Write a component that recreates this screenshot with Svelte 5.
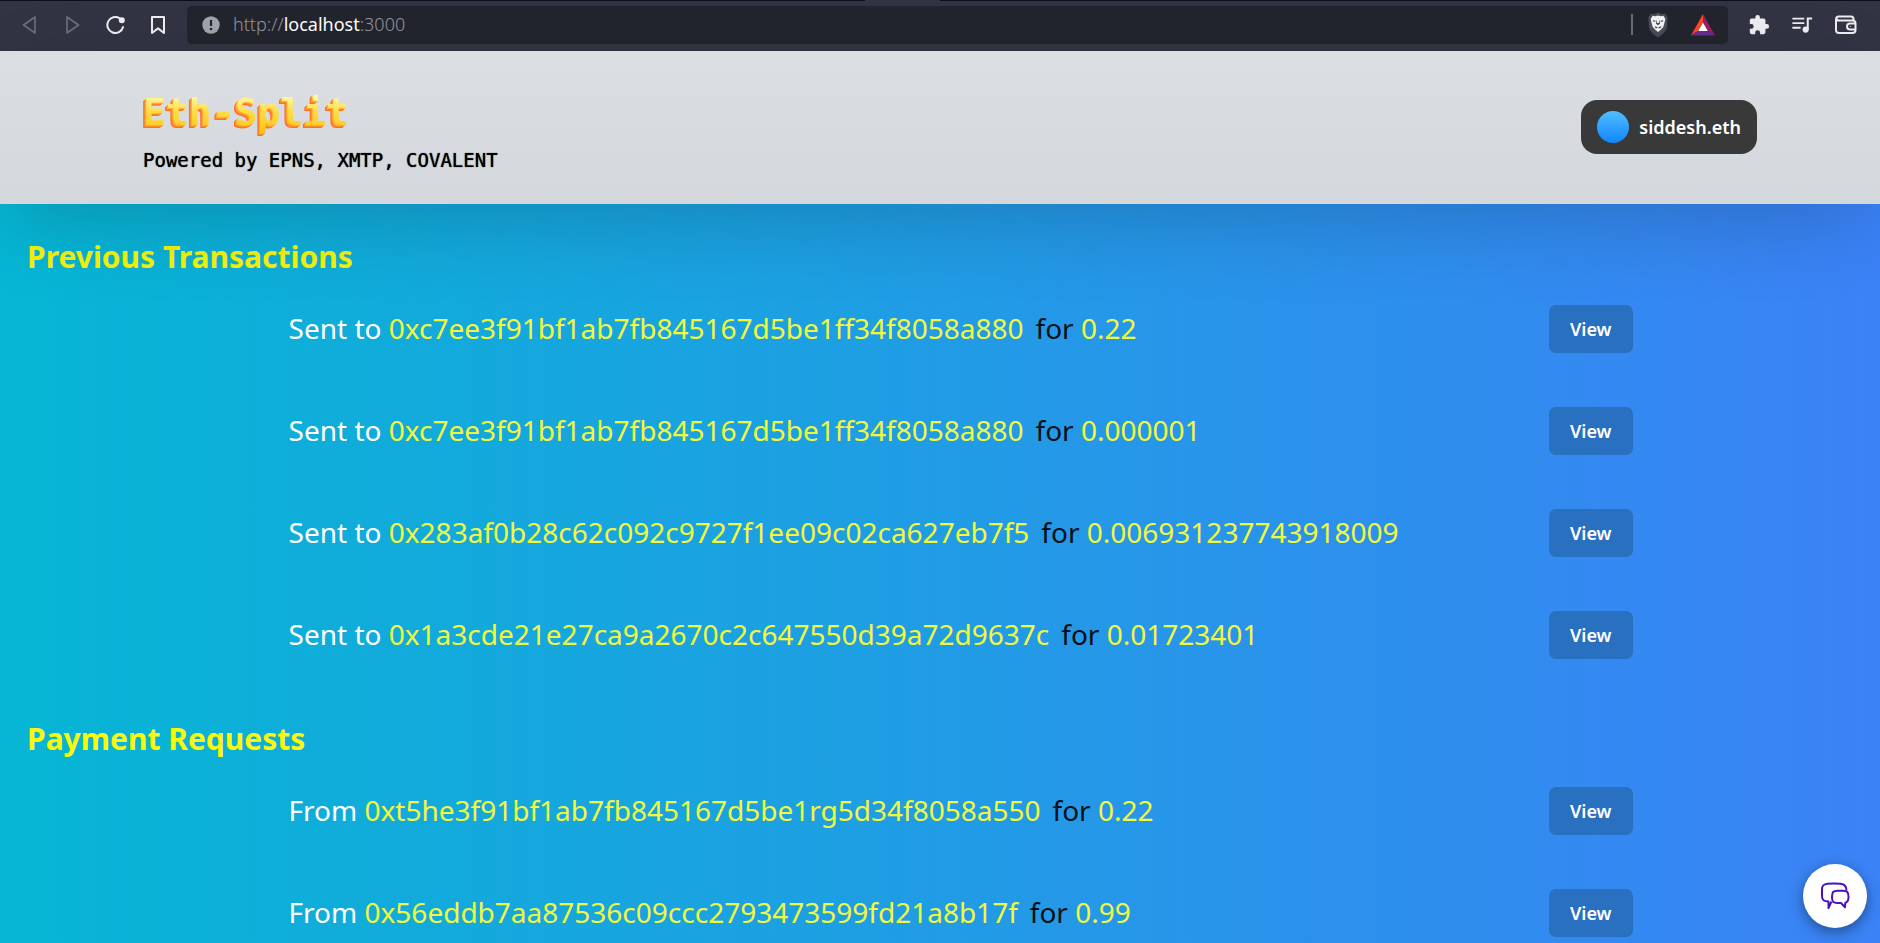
<script>
  const sections = [
    {
      title: 'Previous Transactions',
      verb: 'Sent to',
      rows: [
        { address: '0xc7ee3f91bf1ab7fb845167d5be1ff34f8058a880', amount: '0.22' },
        { address: '0xc7ee3f91bf1ab7fb845167d5be1ff34f8058a880', amount: '0.000001' },
        { address: '0x283af0b28c62c092c9727f1ee09c02ca627eb7f5', amount: '0.006931237743918009' },
        { address: '0x1a3cde21e27ca9a2670c2c647550d39a72d9637c', amount: '0.01723401' }
      ]
    },
    {
      title: 'Payment Requests',
      verb: 'From',
      rows: [
        { address: '0xt5he3f91bf1ab7fb845167d5be1rg5d34f8058a550', amount: '0.22' },
        { address: '0x56eddb7aa87536c09ccc2793473599fd21a8b17f', amount: '0.99' }
      ]
    }
  ];
</script>

<div class="window">
  <nav class="toolbar" aria-label="Browser">
    <div class="tools">
      <button aria-label="Back" class="dim"><svg width="20" height="20" viewBox="0 0 20 20"><path d="M15 2v16L3.500 10z" fill="none" stroke="currentColor" stroke-width="1.7" stroke-linejoin="round" /></svg></button>
      <button aria-label="Forward" class="dim"><svg width="20" height="20" viewBox="0 0 20 20"><path d="M4 2v16l11.500-8z" fill="none" stroke="currentColor" stroke-width="1.7" stroke-linejoin="round" /></svg></button>
      <button aria-label="Reload"><svg width="20" height="20" viewBox="0 0 20 20"><path d="M17.100 12.100a8 8 0 1 1-3.400-8.800" fill="none" stroke="currentColor" stroke-width="2" stroke-linecap="round" /><circle cx="15.800" cy="5.300" r="3" fill="currentColor" /></svg></button>
      <button aria-label="Bookmark"><svg width="20" height="20" viewBox="0 0 20 20"><path d="M3 2h12v16l-6-4.600L3 18z" fill="none" stroke="currentColor" stroke-width="2" stroke-linejoin="round" /></svg></button>
    </div>
    <div class="address">
      <svg width="18" height="18" viewBox="0 0 18 18"><circle cx="9" cy="9" r="8.700" fill="#a2a4ac" /><path d="M9 4v6" stroke="#22252e" stroke-width="2.200" /><circle cx="9" cy="13" r="1.300" fill="#22252e" /></svg>
      <span class="url">http://<b>localhost</b>:3000</span>
      <i class="divider"></i>
      <button aria-label="Shields"><svg width="22" height="26" viewBox="0 0 22 26"><path d="M11 .5 14.500 2 18 1.800 20.500 5 20 15c-.4 4-4 7-9 10.500C6 22 2.400 19 2 15L1.500 5 4 1.800 7.500 2z" fill="#4a4d58" /><path d="M11 3.500 14 4.200l2.400-.4L18.300 7l-.5 2.600-1.500 5.500-2.800 3-2.500 2-2.500-2-2.800-3-1.500-5.500L3.700 7l1.900-3.200 2.400.4z" fill="#f2f2f4" /><path d="m5.500 8 3.500.9-2 1.200zM16.500 8l-3.500.9 2 1.200zM7.600 14l3.400 1.600 3.400-1.600-1.200 2.400-2.200-.8-2.200.8zM9.400 7.500l-.3 4.200 1.900 1.600 1.900-1.600-.3-4.200-.8 3.500h-1.600z" fill="#41444f" /></svg></button>
      <button aria-label="Rewards"><svg width="26" height="22" viewBox="0 0 26 22"><path d="M13 0 1 21.500l7-4.500 5-9z" fill="#ff4724" /><path d="m13 0 12 21.500-7-4.500-5-9z" fill="#9e1f63" /><path d="M1 21.500h24L18 17H8z" fill="#662d91" /><path d="m13 8.500 4.800 8.500H8.200z" fill="#fff" /></svg></button>
    </div>
    <div class="extras">
      <button aria-label="Extensions"><svg width="22" height="22" viewBox="0 0 24 24"><path fill="currentColor" d="M20.500 11H19V7c0-1.100-.9-2-2-2h-4V3.500a2.500 2.500 0 0 0-5 0V5H4c-1.100 0-2 .9-2 2v3.800h1.500a2.700 2.700 0 0 1 0 5.400H2V20c0 1.100.9 2 2 2h3.800v-1.500a2.700 2.700 0 0 1 5.400 0V22H17c1.100 0 2-.9 2-2v-4h1.500a2.500 2.500 0 0 0 0-5z" /></svg></button>
      <button aria-label="Media"><svg width="22" height="22" viewBox="0 0 24 24"><path d="M1.500 5h13M1.500 10h13M1.500 15h9" stroke="currentColor" stroke-width="2" /><path d="M18.300 17V5H23" fill="none" stroke="currentColor" stroke-width="2.200" /><circle cx="16" cy="17" r="3.400" fill="currentColor" /></svg></button>
      <button aria-label="Wallet"><svg width="24" height="24" viewBox="0 0 24 24" fill="none" stroke="currentColor" stroke-width="2"><path d="M19.500 7.500V6a2.500 2.500 0 0 0-2.500-2.500H5A3 3 0 0 0 2 6.500V17a3 3 0 0 0 3 3h13.500a3 3 0 0 0 3-3v-6.500a3 3 0 0 0-3-3H5a3 3 0 0 1-2.700-1.700" /><path d="M21.500 10.500H16a3 3 0 0 0 0 6h5.500" /><circle cx="16.400" cy="13.500" r=".6" fill="currentColor" stroke="none" /></svg></button>
    </div>
  </nav>

  <header>
    <div class="brand">
      <h1>Eth-Split</h1>
      <p>Powered by EPNS, XMTP, COVALENT</p>
    </div>
    <button class="account"><span class="avatar"></span>siddesh.eth</button>
  </header>

  <main>
    {#each sections as section}
      <section>
        <h2>{section.title}</h2>
        <ul>
          {#each section.rows as row}
            <li>
              <p>{section.verb} <span class="value address-text">{row.address}</span><span class="for">for</span> <span class="value">{row.amount}</span></p>
              <button class="view">View</button>
            </li>
          {/each}
        </ul>
      </section>
    {/each}
  </main>

  <button class="chat" aria-label="Chat">
    <svg width="30" height="28" viewBox="0 0 30 28" fill="none" stroke="#4a0fc4" stroke-width="2" stroke-linejoin="round"><path d="M11.500 19.500 8.500 26V19.500C3.500 19.500 2 18 2 14V7.500c0-4 1.500-5.300 5.500-5.700 4-.4 9-.4 13 0 4 .4 6 2 6 6.700" /><path d="M26 20.500c2-.7 2.500-2 2.500-5.500 0-5-1.200-6.200-5.500-6.300h-5.500c-4.300.1-5.500 1.300-5.500 6.300s1.200 5.900 5.500 6h3.500l4 4.200.3-4.400z" /></svg>
  </button>
</div>

<style>
  :global(body) {
    margin: 0;
    overflow: hidden;
  }
  .window {
    position: relative;
    height: 100vh;
    overflow: hidden;
    display: flex;
    flex-direction: column;
    font-family: "Noto Sans", "Open Sans", sans-serif;
    background: linear-gradient(90deg, #06b6d4, #3b82f6);
  }
  button {
    font: inherit;
    border: 0;
    padding: 0;
    background: none;
    color: inherit;
    cursor: pointer;
  }
  svg {
    display: block;
  }
  h1, h2, p, ul {
    margin: 0;
    padding: 0;
  }
  .toolbar {
    flex: none;
    display: flex;
    align-items: center;
    height: 49px;
    padding-bottom: 2px;
    background:
      linear-gradient(90deg, #0c0d1d 46%, #323443 46%, #323443 50%, #0c0d1d 50%) top / 100% 1px no-repeat,
      #323443;
    color: #eceef2;
  }
  .tools {
    display: flex;
    gap: 23px;
    padding: 0 18px 0 20px;
  }
  .dim {
    color: #6b6e7b;
  }
  .address {
    flex: 1;
    display: flex;
    align-items: center;
    height: 38px;
    padding: 0 12px 0 15px;
    border-radius: 5px;
    background: #22252e;
  }
  .url {
    flex: 1;
    padding-left: 13px;
    font-size: 18px;
    line-height: 24px;
    padding-bottom: 2px;
    font-weight: 300;
    color: #94969d;
  }
  .url b {
    font-weight: 400;
    color: #fff;
  }
  .divider {
    width: 2px;
    height: 21px;
    margin-right: 14px;
    background: #6a6d76;
  }
  .address button + button {
    margin-left: 21px;
  }
  .extras {
    display: flex;
    align-items: center;
    gap: 21px;
    padding: 0 22px 0 20px;
  }
  header {
    position: relative;
    flex: none;
    display: flex;
    align-items: flex-start;
    justify-content: space-between;
    padding: 35px 123px 22px 143px;
    background: linear-gradient(180deg, #dbdfe3, #d4d7dc);
    box-shadow: 0 24px 88px -12px rgba(0, 0, 0, 0.2);
  }
  h1 {
    width: fit-content;
    font: 700 38px/52px "DejaVu Sans Mono", monospace;
    color: transparent;
    background: linear-gradient(180deg, #fff6a0 20%, #ffdc44 50%, #ffc818 85%);
    background-clip: text;
    filter: drop-shadow(-1px 1px 0 #ffae2c) drop-shadow(-1px 1px 0 #ff8a2c) drop-shadow(-1px 1px 0 #ff6e2e);
  }
  .brand p {
    font: 19px/44px "DejaVu Sans Mono", monospace;
    color: #000;
    text-shadow: 0 0 1px #000;
  }
  .account {
    display: flex;
    align-items: center;
    gap: 10px;
    height: 54px;
    margin-top: 14px;
    padding: 0 16px;
    border-radius: 16px;
    background: #393939;
    color: #fff;
    font-size: 18px;
    font-weight: 600;
  }
  .avatar {
    width: 32px;
    height: 32px;
    border-radius: 50%;
    background: linear-gradient(180deg, #52bdff, #0f86ff);
  }
  section {
    padding-top: 29px;
  }
  h2 {
    padding-left: 27px;
    font-size: 30px;
    line-height: 48px;
    font-weight: 700;
    color: #f4f30c;
  }
  section + section h2 {
    color: #fbf90a;
  }
  ul {
    list-style: none;
    padding: 24px 13.15% 27px 15.35%;
    display: flex;
    flex-direction: column;
    gap: 54px;
  }
  li {
    display: flex;
    align-items: center;
    justify-content: space-between;
    height: 48px;
    color: #fff;
    font-size: 28px;
    white-space: nowrap;
  }
  li p {
    padding-bottom: 3px;
  }
  .value {
    color: #f2f93c;
  }
  .address-text {
    margin-right: 12px;
  }
  .for {
    color: #061018;
  }
  .view {
    width: 84px;
    height: 48px;
    border-radius: 7px;
    background: #2970c0;
    font-size: 18px;
    font-weight: 600;
  }
  .chat {
    position: absolute;
    right: 13px;
    bottom: 15px;
    width: 64px;
    height: 64px;
    display: grid;
    place-items: center;
    border-radius: 50%;
    background: #fff;
    box-shadow: 0 4px 14px rgba(0, 0, 0, 0.4);
  }
</style>
